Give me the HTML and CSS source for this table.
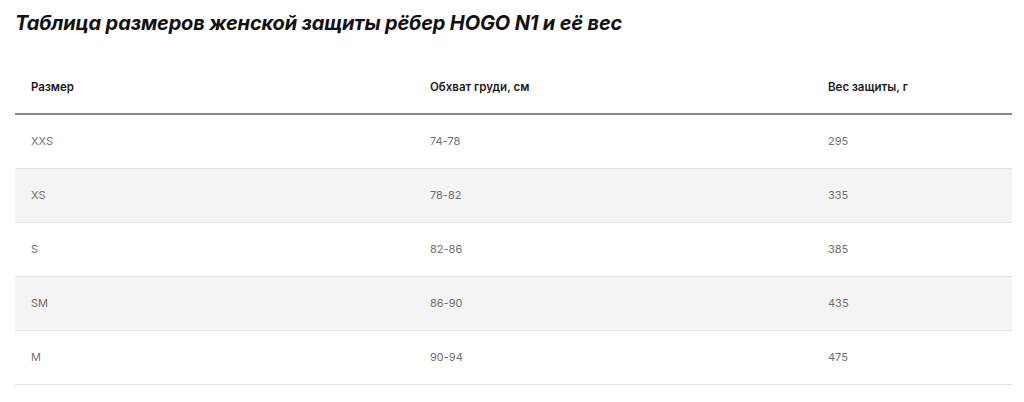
FILE: index.html
```html
<!DOCTYPE html>
<html lang="ru">
<head>
<meta charset="utf-8">
<link rel="stylesheet" href="styles.css">
</head>
<body>
<div class="page">
  <h2 class="title">Таблица размеров женской защиты рёбер HOGO N1 и её вес</h2>
  <table class="sizes">
    <thead>
      <tr><th class="c1">Размер</th><th class="c2">Обхват груди, см</th><th class="c3">Вес защиты, г</th></tr>
    </thead>
    <tbody>
      <tr><td>XXS</td><td>74-78</td><td>295</td></tr>
      <tr class="alt"><td>XS</td><td>78-82</td><td>335</td></tr>
      <tr><td>S</td><td>82-86</td><td>385</td></tr>
      <tr class="alt"><td>SM</td><td>86-90</td><td>435</td></tr>
      <tr><td>M</td><td>90-94</td><td>475</td></tr>
    </tbody>
  </table>
</div>
</body>
</html>
```

FILE: styles.css
```css
html, body { margin: 0; padding: 0; background: #fff; }
.page { padding: 9px 12px 0 15px; font-family: Inter, "Noto Sans", sans-serif; }
.title {
  margin: 0;
  font-size: 20px;
  line-height: 28px;
  font-weight: 700;
  font-style: italic;
  color: #111;
  letter-spacing: -0.15px;
}
.sizes {
  width: 997px;
  border-collapse: collapse;
  margin-top: 23px;
  table-layout: fixed;
}
.sizes th, .sizes td { box-sizing: border-box; }
.c1 { width: 399px; }
.c2 { width: 398px; }
.c3 { width: 200px; }
.sizes th {
  text-align: left;
  font-size: 11.5px;
  font-weight: 600;
  color: #1a1a1a;
  height: 54px;
  padding: 0 16px;
  border-bottom: 2px solid #8a8a8a;
}
.sizes td {
  font-size: 11px;
  font-weight: 400;
  color: #707070;
  height: 54px;
  padding: 0 16px;
  border-bottom: 1px solid #e4e4e4;
}
.sizes tr.alt td { background: #f4f4f4; }
```
